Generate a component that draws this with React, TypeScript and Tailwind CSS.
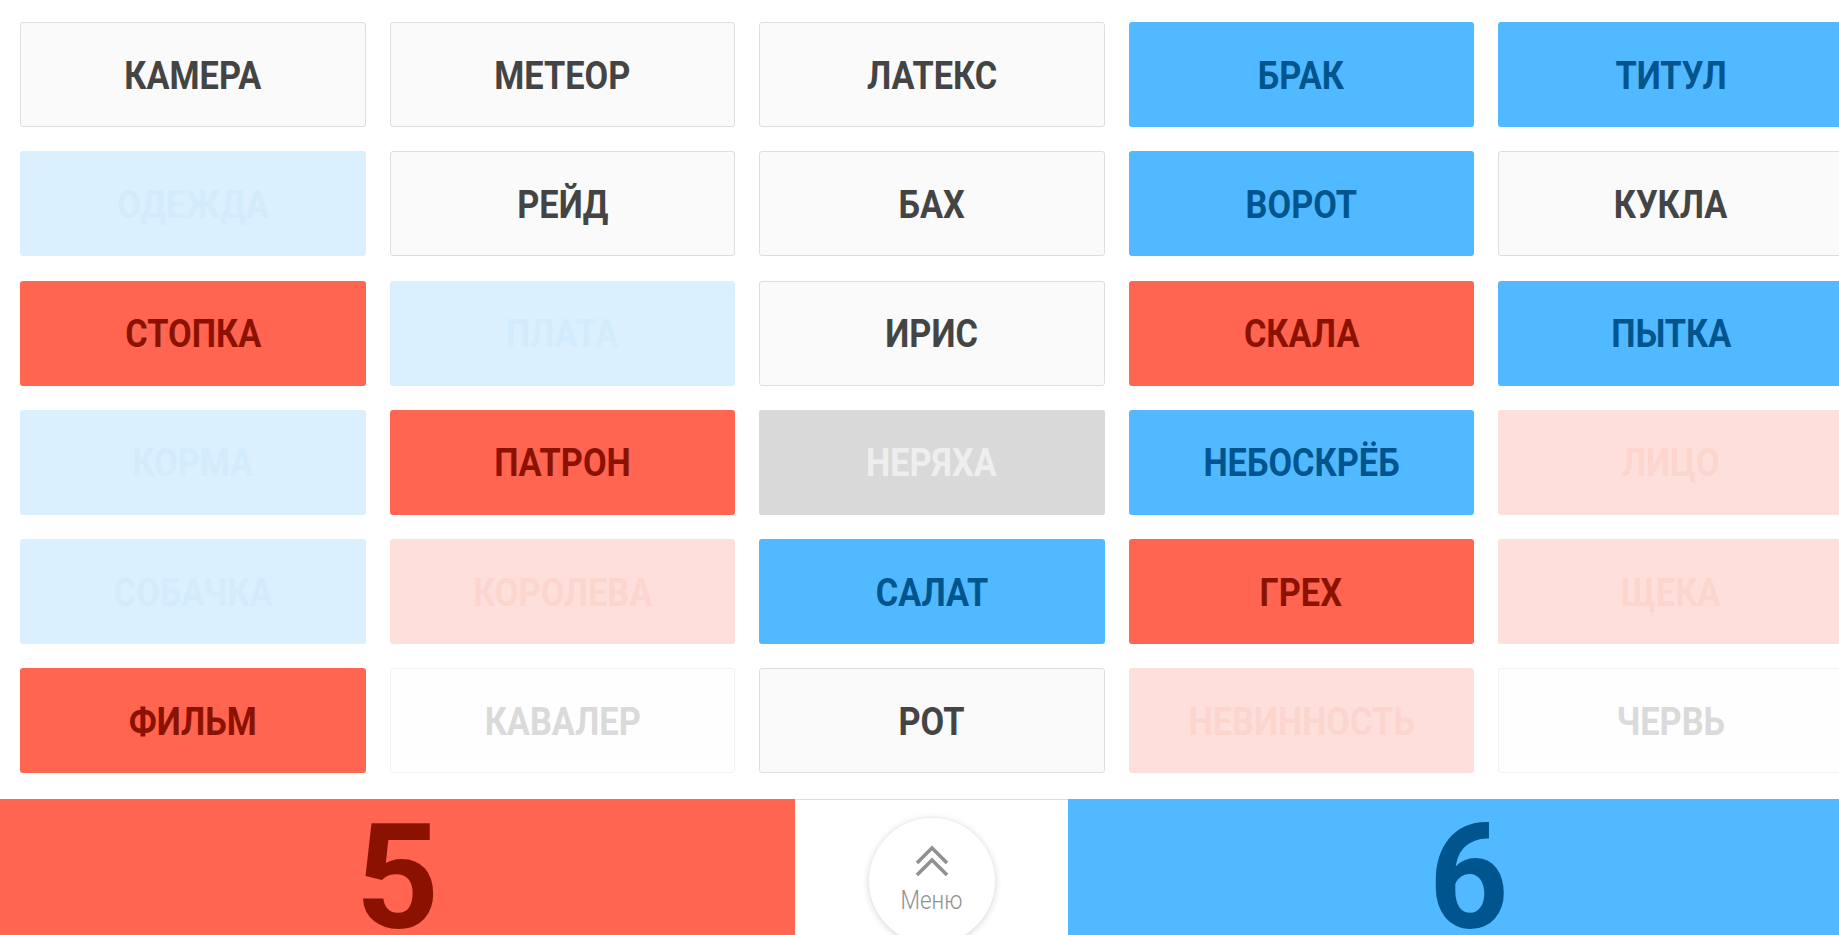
import React from 'react'

type Kind = 'n' | 'b' | 'r' | 'fb' | 'fr' | 'fn' | 'g'

const styles: Record<Kind, string> = {
  n: 'bg-[#fafafa] border border-[#dedede] text-[#444444]',
  b: 'bg-[#51b9ff] text-[#01558e]',
  r: 'bg-[#ff6550] text-[#8b1200]',
  fb: 'bg-[#daf0fe] text-[#d2ecfd]',
  fr: 'bg-[#ffdfdb] text-[#fcd5cf]',
  fn: 'bg-[#fefefe] border border-[#f2f2f2] text-[#dadada]',
  g: 'bg-[#d9d9d9] text-[#eeeeee]',
}

const cards: [string, Kind][] = [
  ['КАМЕРА', 'n'], ['МЕТЕОР', 'n'], ['ЛАТЕКС', 'n'], ['БРАК', 'b'], ['ТИТУЛ', 'b'],
  ['ОДЕЖДА', 'fb'], ['РЕЙД', 'n'], ['БАХ', 'n'], ['ВОРОТ', 'b'], ['КУКЛА', 'n'],
  ['СТОПКА', 'r'], ['ПЛАТА', 'fb'], ['ИРИС', 'n'], ['СКАЛА', 'r'], ['ПЫТКА', 'b'],
  ['КОРМА', 'fb'], ['ПАТРОН', 'r'], ['НЕРЯХА', 'g'], ['НЕБОСКРЁБ', 'b'], ['ЛИЦО', 'fr'],
  ['СОБАЧКА', 'fb'], ['КОРОЛЕВА', 'fr'], ['САЛАТ', 'b'], ['ГРЕХ', 'r'], ['ЩЕКА', 'fr'],
  ['ФИЛЬМ', 'r'], ['КАВАЛЕР', 'fn'], ['РОТ', 'n'], ['НЕВИННОСТЬ', 'fr'], ['ЧЕРВЬ', 'fn'],
]

function Card({ word, kind }: { word: string; kind: Kind }) {
  return (
    <div className={`h-[105px] rounded-[3px] flex items-center justify-center pt-[3px] ${styles[kind]}`}>
      <span className="inline-block scale-x-[0.88] text-[39px] font-bold leading-none">{word}</span>
    </div>
  )
}

export default function App() {
  return (
    <div className="w-screen h-screen overflow-hidden bg-white" style={{ fontFamily: 'Roboto, "Noto Sans", sans-serif' }}>
      <div className="w-[1870px]">
        <div className="grid grid-cols-[repeat(5,345.5px)] gap-x-[24px] gap-y-[24.3px] pl-[20px] pt-[22px] pb-[25.5px]">
          {cards.map(([w, k]) => <Card key={w} word={w} kind={k} />)}
        </div>
        <div className="flex h-[140px]">
          <div className="w-[795px] bg-[#ff6550] flex justify-center overflow-hidden">
            <span className="inline-block text-[146px] font-bold leading-none pt-[7px] text-[#8b1200]">5</span>
          </div>
          <div className="w-[273px] border-t border-[#dddddd] flex justify-center">
            <div className="mt-[18px] w-[126px] h-[126px] rounded-full bg-white shadow-[0_1px_7px_rgba(0,0,0,0.18)] flex flex-col items-center pt-[25px]">
              <svg width="34" height="34" viewBox="0 0 34 34" fill="none" stroke="#909090" strokeWidth="3.5" strokeLinecap="butt">
                <path d="M2 20 L17 5 L32 20" />
                <path d="M2 32 L17 17 L32 32" />
              </svg>
              <span className="inline-block scale-x-[0.9] text-[25px] font-light leading-none mt-[11px] text-[#909090]">Меню</span>
            </div>
          </div>
          <div className="flex-1 bg-[#51b9ff] flex justify-center overflow-hidden">
            <span className="inline-block scale-x-[0.95] text-[146px] font-bold leading-none pt-[7px] text-[#01558e]">6</span>
          </div>
        </div>
      </div>
    </div>
  )
}
